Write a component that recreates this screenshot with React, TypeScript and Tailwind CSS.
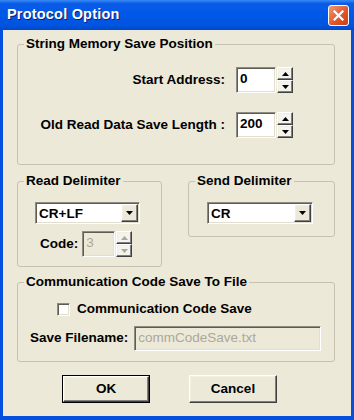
const sunken =
  'border border-t-[#8E8C80] border-l-[#8E8C80] border-r-[#FFFFFF] border-b-[#FFFFFF] shadow-[inset_1px_1px_0_#5E5C55,inset_-1px_-1px_0_#E2DFD0]';
const raised =
  'border border-t-[#FFFFFF] border-l-[#FFFFFF] border-r-[#404040] border-b-[#404040] shadow-[inset_-1px_-1px_0_#808080,inset_1px_1px_0_#F1EFE2]';

const UpArrow = ({ dim }: { dim?: boolean }) => (
  <svg width="7" height="4" viewBox="0 0 7 4">
    <path d="M3.5 0 L7 4 L0 4 Z" fill={dim ? '#ACA899' : '#000'} />
  </svg>
);

const DownArrow = ({ dim }: { dim?: boolean }) => (
  <svg width="7" height="4" viewBox="0 0 7 4">
    <path d="M0 0 L7 0 L3.5 4 Z" fill={dim ? '#ACA899' : '#000'} />
  </svg>
);

const Spinner = ({ disabled }: { disabled?: boolean }) => (
  <div className="flex flex-col w-[16px] h-[26px] ml-[1px]">
    <div className={`flex-1 flex items-center justify-center bg-[#F4F3EE] ${raised}`}>
      <UpArrow dim={disabled} />
    </div>
    <div className={`flex-1 flex items-center justify-center bg-[#F4F3EE] ${raised}`}>
      <DownArrow dim={disabled} />
    </div>
  </div>
);

const SpinEdit = ({ value, width, disabled }: { value: string; width: string; disabled?: boolean }) => (
  <div className="flex items-center">
    <div
      className={`${width} h-[26px] ${sunken} ${
        disabled ? 'bg-[#ECE9D8] text-[#ACA899] font-normal' : 'bg-white text-black'
      } flex items-start pl-[3px] pt-[3px] text-[13.5px] leading-[15px]`}
    >
      {value}
    </div>
    <Spinner disabled={disabled} />
  </div>
);

const Combo = ({ value, width }: { value: string; width: string }) => (
  <div className={`${width} h-[22px] bg-white ${sunken} flex items-center`}>
    <span className="flex-1 pl-[3px] text-[13.5px] leading-[15px]">{value}</span>
    <div className={`w-[17px] h-[18px] mr-[1px] bg-[#ECE9D8] flex items-center justify-center ${raised}`}>
      <DownArrow />
    </div>
  </div>
);

const Group = ({ title, className, children }: { title: string; className?: string; children: React.ReactNode }) => (
  <fieldset className={`border border-[#C5C2B2] rounded-[3px] ${className ?? ''}`}>
    <legend className="ml-[6px] px-[2px] text-[13.5px] leading-[14px]">{title}</legend>
    {children}
  </fieldset>
);

const WinButton = ({ label, isDefault }: { label: string; isDefault?: boolean }) => (
  <div className={`w-[88px] h-[28px] ${isDefault ? 'border border-black' : ''}`}>
    <div className={`w-full h-full bg-[#ECE9D8] flex items-center justify-center text-[13.5px] ${raised}`}>
      {label}
    </div>
  </div>
);

export default function App() {
  return (
    <div className="w-[354px] h-[420px] bg-[#0550DD] flex flex-col font-['Liberation_Sans',Arial,sans-serif] font-bold text-black select-none">
      {/* title bar */}
      <div className="h-[30px] shrink-0 flex items-center justify-between pl-[7px] pr-[5px] bg-[linear-gradient(#3A8BF5_0%,#0A5CE8_12%,#0058E6_50%,#0054E0_85%,#0048C8_100%)]">
        <span className="text-white text-[14.5px] tracking-[0.2px] [text-shadow:1px_1px_0_#0A1E7A]">Protocol Option</span>
        <div className="w-[21px] h-[21px] rounded-[3px] border border-white bg-[linear-gradient(135deg,#F09A78,#E2572A_55%,#C8401A)] flex items-center justify-center">
          <svg width="11" height="11" viewBox="0 0 11 11">
            <path d="M1.5 1.5 L9.5 9.5 M9.5 1.5 L1.5 9.5" stroke="#fff" strokeWidth="2.2" strokeLinecap="square" />
          </svg>
        </div>
      </div>

      {/* client */}
      <div className="flex-1 mx-[3px] mb-[4px] bg-[#ECE9D8] flex flex-col pt-[7px]">
        <Group title="String Memory Save Position" className="ml-[14px] w-[318px]">
          <div className="flex flex-col items-end pr-[41px] pt-[16px] pb-[26px] gap-[19px]">
            <div className="flex items-center">
              <span className="mr-[11px] text-[13.5px]">Start Address:</span>
              <SpinEdit value="0" width="w-[40px]" />
            </div>
            <div className="flex items-center">
              <span className="mr-[11px] text-[13.5px]">Old Read Data Save Length :</span>
              <SpinEdit value="200" width="w-[40px]" />
            </div>
          </div>
        </Group>

        <div className="flex items-start ml-[14px] mt-[9px] gap-[26px]">
          <Group title="Read Delimiter" className="w-[145px]">
            <div className="flex flex-col pt-[14px] pl-[17px] pb-[9px]">
              <Combo value="CR+LF" width="w-[105px]" />
              <div className="flex items-center mt-[7px] pl-[5px]">
                <span className="text-[13.5px] mr-[4px]">Code:</span>
                <SpinEdit value="3" width="w-[33px]" disabled />
              </div>
            </div>
          </Group>
          <Group title="Send Delimiter" className="w-[147px]">
            <div className="flex flex-col pt-[14px] pl-[18px] pb-[12px]">
              <Combo value="CR" width="w-[106px]" />
            </div>
          </Group>
        </div>

        <Group title="Communication Code Save To File" className="ml-[14px] w-[318px] mt-[8px]">
          <div className="flex flex-col pt-[13px] pb-[10px]">
            <div className="flex items-center pl-[39px] h-[14px]">
              <div className={`w-[13px] h-[13px] bg-white ${sunken}`} />
              <span className="ml-[7px] text-[13.5px]">Communication Code Save</span>
            </div>
            <div className="flex items-center pl-[12px] mt-[10px]">
              <span className="text-[13.5px] mr-[6px]">Save Filename:</span>
              <div className={`w-[187px] h-[25px] bg-[#ECE9D8] ${sunken} flex items-start pl-[3px] pt-[3px] text-[13.5px] leading-[15px] text-[#ACA899] font-normal`}>
                commCodeSave.txt
              </div>
            </div>
          </div>
        </Group>

        <div className="flex items-center ml-[59px] mt-[13px] gap-[39px]">
          <WinButton label="OK" isDefault />
          <WinButton label="Cancel" />
        </div>
      </div>
    </div>
  );
}
